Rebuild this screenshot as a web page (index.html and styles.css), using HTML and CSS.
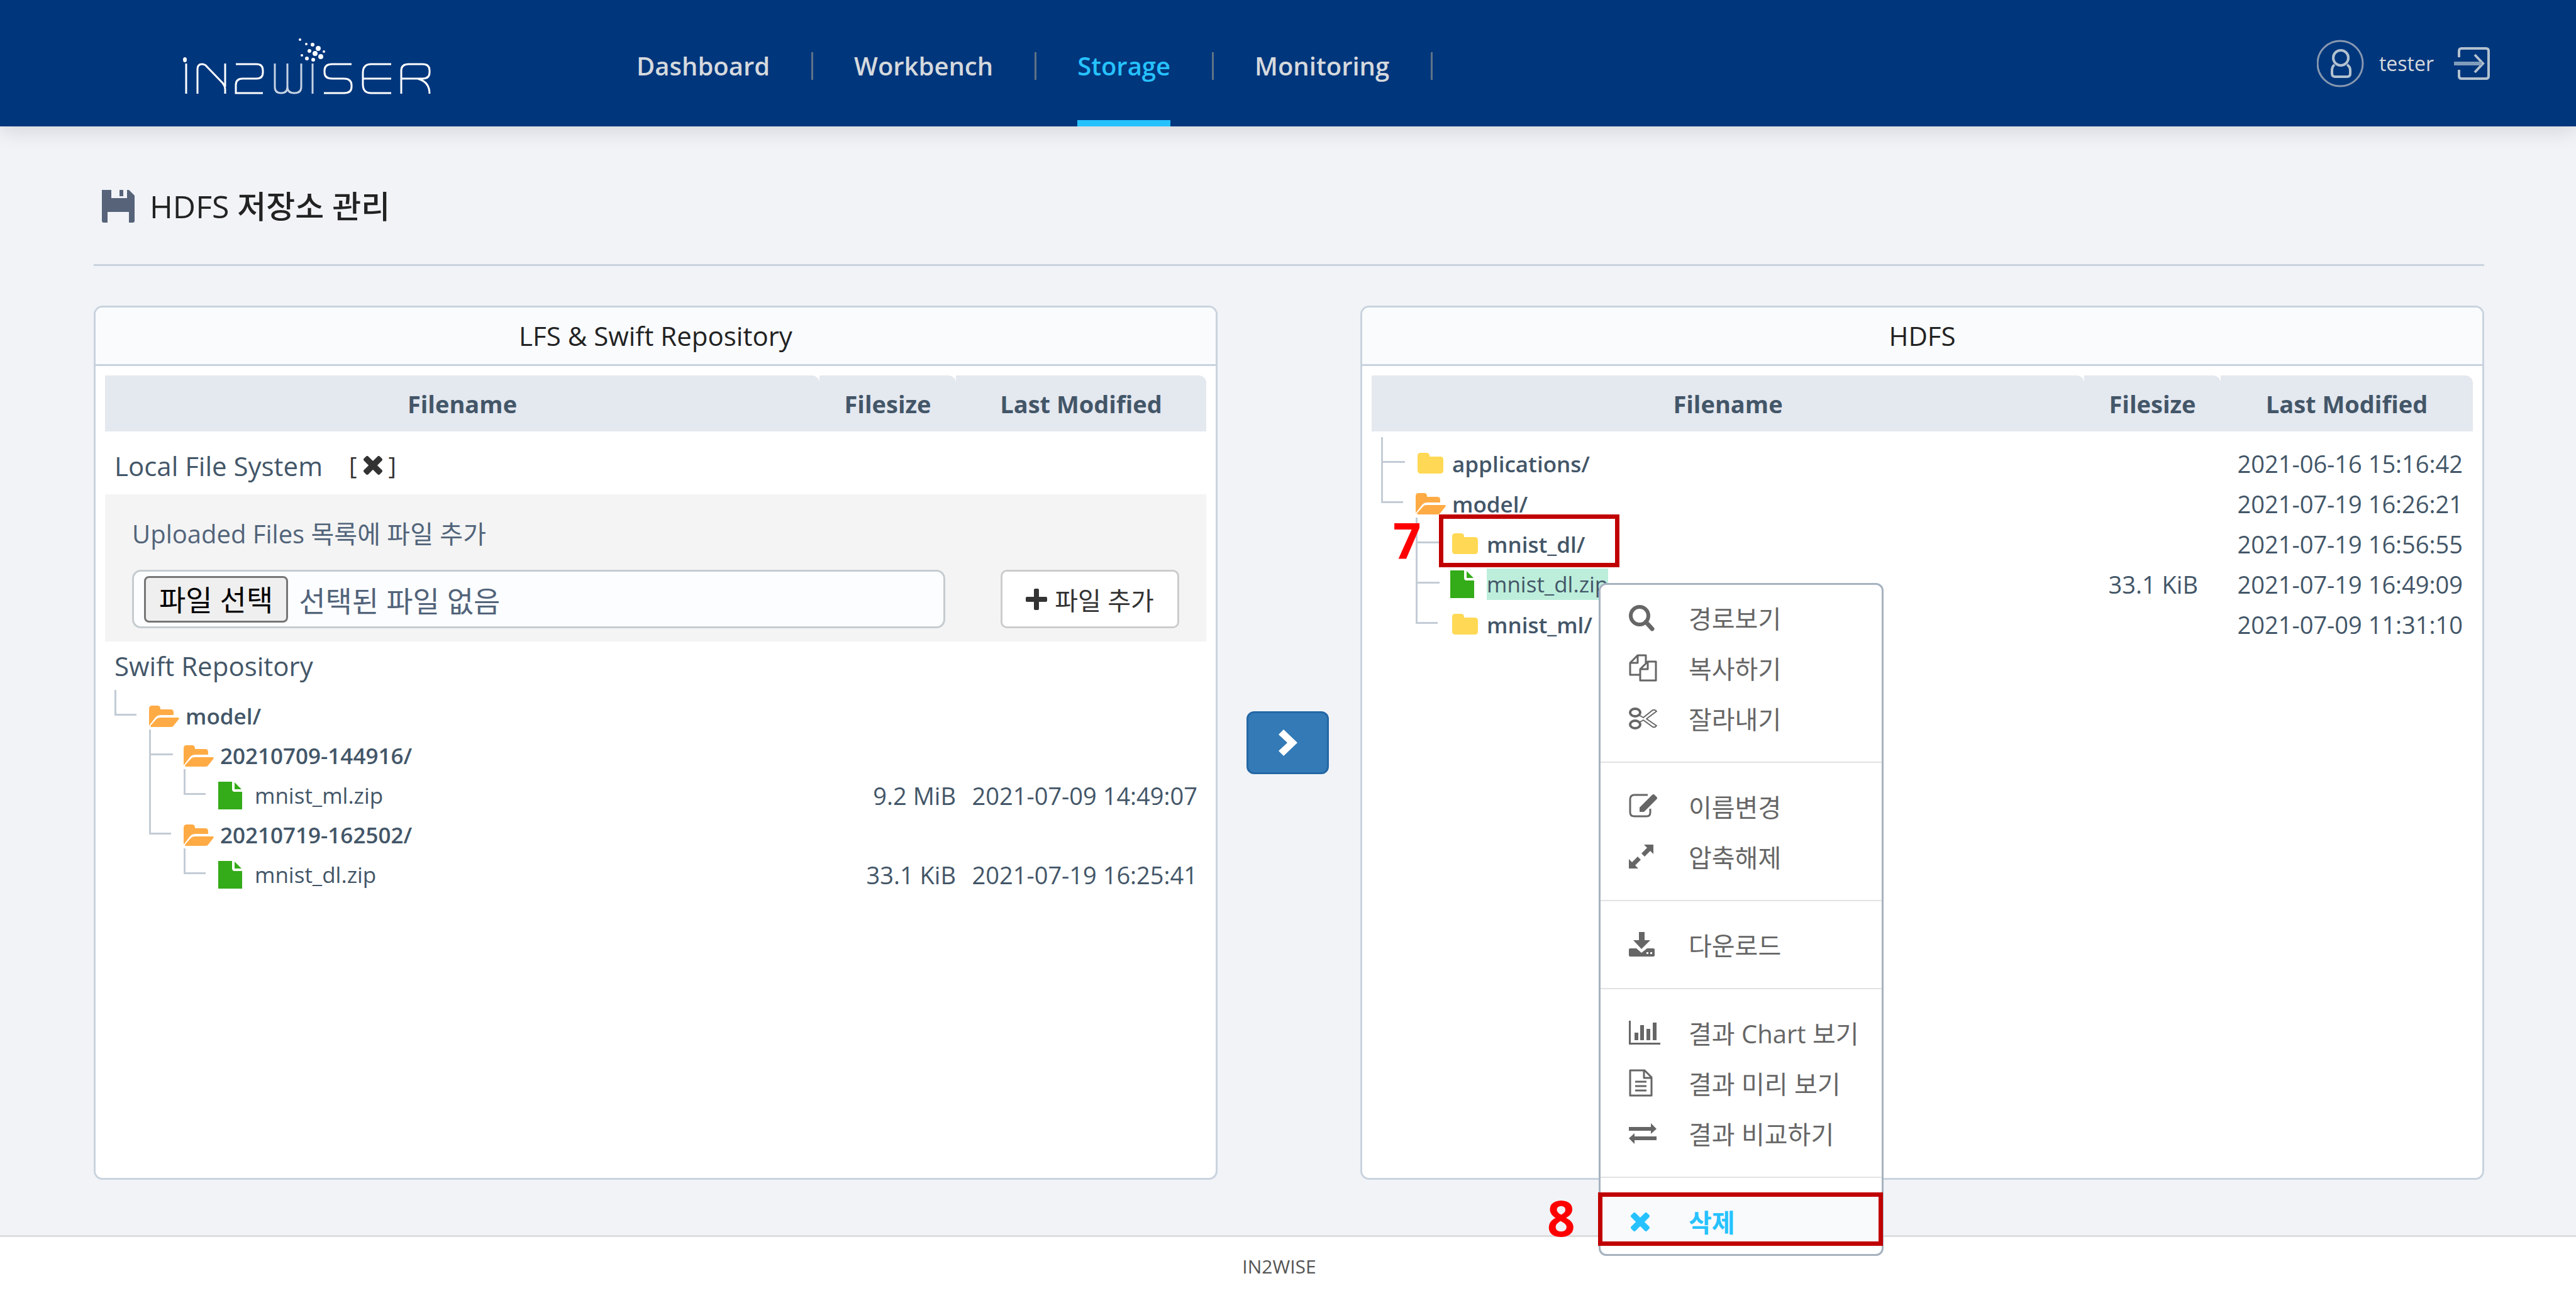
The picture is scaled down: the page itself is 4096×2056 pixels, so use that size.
FILE: index.html
```
<!DOCTYPE html>
<html lang="ko">
<head>
<meta charset="utf-8">
<meta name="viewport" content="width=device-width, initial-scale=1">
<title>IN2WISER - HDFS 저장소 관리</title>
<link rel="stylesheet" href="styles.css">
</head>
<body>

<svg class="sprite" aria-hidden="true">
  <symbol id="folder" viewBox="0 0 48 44"><path fill="#ffd955" d="M3 10q0-5 5-5h9q5 0 5 5v1h17q5 0 5 5v17q0 5-5 5H8q-5 0-5-5z"/></symbol>
  <symbol id="folder-open" viewBox="0 0 48 44"><path fill="#ffab45" d="M0 10q0-5 5-5h8q5 0 5 5v1h16q5 0 5 5v4H19q-6 0-9 4L0 37z"/><path fill="#ffab45" d="M18 24h28q3 0 1 3l-8 10q-1 2-4 2H4q-3 0-1-3l9-10q2-2 6-2z"/></symbol>
  <symbol id="file" viewBox="0 0 48 44"><path fill="#34ab18" d="M0 0h22v12q0 4 4 4h12v28H0z"/><path fill="#34ab18" d="M26 1l11 11H26z"/></symbol>
  <symbol id="times" viewBox="302 370 1188 1184"><path d="M1490 1322q0 40-28 68l-136 136q-28 28-68 28t-68-28l-294-294-294 294q-28 28-68 28t-68-28l-136-136q-28-28-28-68t28-68l294-294-294-294q-28-28-28-68t28-68l136-136q28-28 68-28t68 28l294 294 294-294q28-28 68-28t68 28l136 136q28 28 28 68t-28 68l-294 294 294 294q28 28 28 68z"/></symbol>
</svg>

<header class="topbar">
  <a class="logo" href="#" aria-label="IN2WISER">
    <svg viewBox="0 0 400 94" fill="none" stroke="#fff" stroke-width="3">
      <path d="M8 43V91M26 91V52Q26 44 33 44Q38 44 41 48L66 74Q70 79 70 84V91M70 43V80"/>
      <path d="M87 44H120Q130 44 130 54V57Q130 67 120 67H98Q87 67 87 77V90H130"/>
      <path d="M149 43V80Q149 90 159 90Q169 90 169 80V43M169 80Q169 90 180 90Q191 90 191 80V43M209 43V91" stroke="#c5d3e3"/>
      <path d="M271 44H240Q228 44 228 54V57Q228 67 240 67H259Q271 67 271 78V80Q271 90 259 90H227"/>
      <path d="M334 44H302Q289 44 289 58V76Q289 90 302 90H334M290 67H334"/>
      <path d="M350 91V54Q350 44 362 44H384Q395 44 395 54V57Q395 67 384 67H351M376 67Q395 72 395 91"/>
      <g fill="#fff" stroke="none"><ellipse cx="6" cy="37" rx="3" ry="4"/><circle cx="189" cy="5" r="2"/><circle cx="199" cy="12" r="2"/><circle cx="209" cy="13" r="3"/><circle cx="218" cy="19" r="4"/><circle cx="204" cy="23" r="3"/><circle cx="227" cy="24" r="2"/><circle cx="213" cy="27" r="4"/><circle cx="192" cy="30" r="2"/><circle cx="222" cy="32" r="4"/><circle cx="200" cy="35" r="3"/><circle cx="210" cy="37" r="3"/></g>
    </svg>
  </a>
  <nav class="nav">
    <a class="nav-link" href="#">Dashboard</a>
    <a class="nav-link" href="#">Workbench</a>
    <a class="nav-link active" href="#" aria-current="page">Storage</a>
    <a class="nav-link" href="#">Monitoring</a>
  </nav>
  <div class="user">
    <svg class="user-icon" viewBox="0 0 75 76" fill="none"><circle cx="37" cy="38" r="36" stroke="#8798b0" stroke-width="3"/><g stroke="#b3c2cf" stroke-width="4"><ellipse cx="38" cy="29" rx="12" ry="12"/><path d="M28 40Q24 43 24 49V54Q24 59 29 59H48Q53 59 53 54V49Q53 43 48 40"/></g></svg>
    <span class="user-name">tester</span>
    <a class="logout" href="#" aria-label="로그아웃"><svg viewBox="0 0 58 52" fill="none" stroke="#b3c2cf" stroke-width="4"><path d="M8 16V6Q8 2 12 2H51Q55 2 55 6V46Q55 50 51 50H12Q8 50 8 46V36"/><path d="M33 12L46 26L33 40"/><path stroke="#7f9cba" stroke-width="6" d="M0 26H44"/></svg></a>
  </div>
</header>

<main class="page">
  <h1 class="page-title">
    <svg class="save-icon" viewBox="0 0 52 52"><path fill="#566379" d="M0 0H43L52 9V49Q52 52 49 52H3Q0 52 0 49z"/><path fill="#f1f3f7" d="M15 0H40V13H15zM9 35H43V52H9z"/><path fill="#566379" d="M28 0H34V10H28z"/></svg>
    HDFS 저장소 관리
  </h1>

  <div class="panels">
    <section class="panel">
      <h2 class="panel-title">LFS &amp; Swift Repository</h2>
      <div class="panel-body">
        <table class="files files-local">
          <colgroup><col><col class="col-size"><col class="col-date"></colgroup>
          <thead><tr><th>Filename</th><th>Filesize</th><th>Last Modified</th></tr></thead>
          <tbody>
            <tr><td colspan="3"><div class="section section-local">Local File System
              <button class="close" type="button" aria-label="닫기">[<svg><use href="#times"/></svg>]</button></div></td></tr>
            <tr><td colspan="3">
              <form class="upload">
                <label class="upload-label" for="upload-file">Uploaded Files 목록에 파일 추가</label>
                <div class="upload-row">
                  <label class="file-box"><input class="file-input" id="upload-file" type="file"><span class="file-pick">파일 선택</span><span>선택된 파일 없음</span></label>
                  <button class="add" type="button"><svg viewBox="0 0 34 34"><path d="M13 2q0-2 2-2h4q2 0 2 2v11h11q2 0 2 2v4q0 2-2 2H21v11q0 2-2 2h-4q-2 0-2-2V21H2q-2 0-2-2v-4q0-2 2-2h11z"/></svg>파일 추가</button>
                </div>
              </form></td></tr>
            <tr><td colspan="3"><div class="section section-swift">Swift Repository</div></td></tr>
            <tr><td><div class="node"><i class="guide last"></i><svg class="icon"><use href="#folder-open"/></svg><span class="dir">model/</span></div></td><td></td><td></td></tr>
            <tr><td><div class="node"><i class="guide blank"></i><i class="guide"></i><svg class="icon"><use href="#folder-open"/></svg><span class="dir">20210709-144916/</span></div></td><td></td><td></td></tr>
            <tr><td><div class="node"><i class="guide blank"></i><i class="guide pipe"></i><i class="guide last"></i><svg class="icon"><use href="#file"/></svg><span class="name">mnist_ml.zip</span></div></td><td>9.2 MiB</td><td>2021-07-09 14:49:07</td></tr>
            <tr><td><div class="node"><i class="guide blank"></i><i class="guide last"></i><svg class="icon"><use href="#folder-open"/></svg><span class="dir">20210719-162502/</span></div></td><td></td><td></td></tr>
            <tr><td><div class="node"><i class="guide blank"></i><i class="guide blank"></i><i class="guide last"></i><svg class="icon"><use href="#file"/></svg><span class="name">mnist_dl.zip</span></div></td><td>33.1 KiB</td><td>2021-07-19 16:25:41</td></tr>
          </tbody>
        </table>
      </div>
    </section>

    <button class="transfer" type="button" aria-label="HDFS로 복사"><svg viewBox="0 0 30 42"><path d="M8 0L30 21L8 42L0 34L14 21L0 8z" fill="#fff"/></svg></button>

    <section class="panel">
      <h2 class="panel-title">HDFS</h2>
      <div class="panel-body">
        <table class="files files-hdfs">
          <colgroup><col><col class="col-size"><col class="col-date"></colgroup>
          <thead><tr><th>Filename</th><th>Filesize</th><th>Last Modified</th></tr></thead>
          <tbody>
            <tr><td><div class="node"><i class="guide"></i><svg class="icon"><use href="#folder"/></svg><span class="dir">applications/</span></div></td><td></td><td>2021-06-16 15:16:42</td></tr>
            <tr><td><div class="node"><i class="guide last"></i><svg class="icon"><use href="#folder-open"/></svg><span class="dir">model/</span></div></td><td></td><td>2021-07-19 16:26:21</td></tr>
            <tr><td><div class="node"><i class="guide blank"></i><i class="guide"></i><svg class="icon"><use href="#folder"/></svg><span class="dir">mnist_dl/</span><b class="mark-box mark-box-dir"></b><b class="mark mark-dir">7</b></div></td><td></td><td>2021-07-19 16:56:55</td></tr>
            <tr><td><div class="node"><i class="guide blank"></i><i class="guide"></i><svg class="icon"><use href="#file"/></svg><span class="name selected">mnist_dl.zip</span></div></td><td>33.1 KiB</td><td>2021-07-19 16:49:09</td></tr>
            <tr><td><div class="node"><i class="guide blank"></i><i class="guide last"></i><svg class="icon"><use href="#folder"/></svg><span class="dir">mnist_ml/</span></div></td><td></td><td>2021-07-09 11:31:10</td></tr>
          </tbody>
        </table>
      </div>

      <div class="menu" role="menu">
        <button class="menu-item" role="menuitem" type="button"><svg viewBox="0 0 50 44" fill="none" stroke="#666"><circle cx="17" cy="19" r="14" stroke-width="6"/><path d="M27 29L37 40" stroke-width="7" stroke-linecap="round"/></svg>경로보기</button>
        <button class="menu-item" role="menuitem" type="button"><svg viewBox="0 0 50 44" fill="none" stroke="#666" stroke-width="3" stroke-linejoin="round"><path d="M17 33H2V14L14 2H27V14M2 14H14V2M18 24L30 12H43V42H18zM18 24H30V12"/></svg>복사하기</button>
        <button class="menu-item" role="menuitem" type="button"><svg viewBox="0 0 50 44" fill="none" stroke="#666"><ellipse cx="10" cy="13" rx="8" ry="6" stroke-width="4"/><ellipse cx="10" cy="32" rx="8" ry="6" stroke-width="4"/><path stroke-width="2" stroke-linejoin="round" d="M16 17L23 21L38 9Q42 8 44 11L28 23L44 34Q42 37 38 36L23 25L16 29"/></svg>잘라내기</button>
        <hr class="menu-line">
        <button class="menu-item" role="menuitem" type="button"><svg viewBox="0 0 50 44" fill="none" stroke="#666"><path stroke-width="3" d="M30 4H9Q2 4 2 11V32Q2 38 9 38H28Q34 38 34 32V26"/><path fill="#666" stroke="none" d="M17 24L37 4Q39 2 41 4L44 7Q46 9 44 11L24 31H17z"/></svg>이름변경</button>
        <button class="menu-item" role="menuitem" type="button"><svg viewBox="0 0 50 44" fill="#666"><path d="M24 3H39V18L34 13L25 22L20 17L29 8zM0 41V26L5 31L14 22L19 27L10 36L15 41z"/></svg>압축해제</button>
        <hr class="menu-line">
        <button class="menu-item" role="menuitem" type="button"><svg viewBox="0 0 50 44" fill="#666"><path d="M16 2H25V15H34L20 29L7 15H16zM2 28H12L20 35L29 28H39Q41 28 41 30V39Q41 41 39 41H2Q0 41 0 39V30Q0 28 2 28z"/><path fill="#fff" d="M28 34h3v3h-3zM34 34h3v3h-3z"/></svg>다운로드</button>
        <hr class="menu-line">
        <button class="menu-item" role="menuitem" type="button"><svg viewBox="0 0 50 44" fill="#666"><path d="M0 3H3V38H50V41H0zM9 22H15V34H9zM18 10H24V34H18zM28 16H34V34H28zM38 6H44V34H38z"/></svg>결과 Chart 보기</button>
        <button class="menu-item" role="menuitem" type="button"><svg viewBox="0 0 50 44" fill="none" stroke="#666" stroke-width="3"><path stroke-linejoin="round" d="M2 2H25L36 13V42H2zM24 2V14H36"/><path d="M10 20H28M10 27H28M10 34H28"/></svg>결과 미리 보기</button>
        <button class="menu-item" role="menuitem" type="button"><svg viewBox="0 0 50 44" fill="#666"><path d="M0 12H35V6L44 15L35 23V18H0zM44 33H9V39L0 30L9 22V27H44z"/></svg>결과 비교하기</button>
        <hr class="menu-line">
        <button class="menu-item danger" role="menuitem" type="button"><svg viewBox="0 0 50 44" fill="#26c2ff"><use href="#times" x="3" y="8" width="30" height="30"/></svg>삭제<b class="mark-box mark-box-delete"></b><b class="mark mark-delete">8</b></button>
      </div>
    </section>
  </div>
</main>

<footer class="footer">IN2WISE</footer>

</body>
</html>
```
FILE: styles.css
```
* { box-sizing: border-box; }

body {
  margin: 0;
  min-height: 100vh;
  display: flex;
  flex-direction: column;
  background: #f1f3f7;
  color: #435668;
  font-family: "Open Sans", "Noto Sans CJK KR", sans-serif;
  font-size: 38px;
}

button { font: inherit; color: inherit; cursor: pointer; }
a { color: inherit; text-decoration: none; }
.sprite { position: absolute; width: 0; height: 0; }

/* Top bar */
.topbar {
  display: flex;
  align-items: center;
  height: 201px;
  padding: 0 136px 0 288px;
  background: #00367c;
  color: #d5d9dd;
  box-shadow: 0 8px 30px rgba(0, 20, 40, .12);
}
.logo { width: 400px; padding-top: 8px; }
.logo svg { display: block; width: 100%; }
.nav {
  display: flex;
  align-self: stretch;
  margin-left: 324px;
  font-size: 40px;
  font-weight: 600;
}
.nav-link {
  position: relative;
  display: flex;
  align-items: center;
  padding-top: 8px;
  margin-right: 134px;
}
.nav-link::after {
  content: "";
  position: absolute;
  left: calc(100% + 66px);
  top: 83px;
  width: 3px;
  height: 44px;
  background: #5f7486;
}
.nav-link.active { color: #26c2ff; }
.nav-link.active::before {
  content: "";
  position: absolute;
  inset: auto 0 0;
  height: 10px;
  background: #26c2ff;
}
.user {
  display: flex;
  align-items: center;
  gap: 24px;
  margin-left: auto;
}
.user-icon { width: 75px; height: 76px; }
.user-name { font-size: 32px; }
.logout { margin-left: 8px; }
.logout svg { display: block; width: 58px; height: 52px; }

/* Page */
.page {
  flex: 1;
  display: flex;
  flex-direction: column;
  padding: 91px 146px 88px 149px;
}
.page-title {
  display: flex;
  align-items: center;
  gap: 24px;
  margin: 0 0 63px;
  padding: 0 0 56px 13px;
  border-bottom: 3px solid #c9d3de;
  color: #222;
  font-size: 50px;
  font-weight: 500;
  line-height: 72px;
}
.save-icon { width: 52px; height: 52px; }
.panels {
  flex: 1;
  display: grid;
  grid-template-columns: 1fr 227px 1fr;
}
.panel {
  position: relative;
  border: 3px solid #c9d3de;
  border-radius: 14px;
  background: #fff;
}
.panel-title {
  margin: 0;
  border-bottom: 3px solid #c9d3de;
  border-radius: 11px 11px 0 0;
  background: #f9fbfd;
  color: #222;
  font-size: 42px;
  font-weight: 500;
  line-height: 90px;
  text-align: center;
}
.panel-body { padding: 15px; }
.transfer {
  place-self: center;
  display: grid;
  place-items: center;
  width: 131px;
  height: 100px;
  margin-right: 4px;
  border: 3px solid #2467a5;
  border-radius: 12px;
  background: #337ab7;
}
.transfer svg { width: 30px; height: 42px; }

/* File tables */
.files {
  --row: 64px;
  width: 100%;
  table-layout: fixed;
  border-spacing: 0;
}
.files-local { --row: 63px; }
.col-size { width: 217px; }
.col-date { width: 401px; }
.files-local .col-date { width: 398px; }
.files th {
  height: 89px;
  padding: 0;
  border-top-right-radius: 12px;
  background: #e4e8ef;
  line-height: 52px;
}
.files td { padding: 0; white-space: nowrap; }
.files td:nth-child(n+2) { text-align: right; }
.files-local td:nth-child(3) { padding-right: 14px; }
.files-hdfs td:nth-child(2) { padding-right: 36px; }
.files-hdfs td:nth-child(3) { padding-right: 16px; }
.files-hdfs thead::after { content: ""; display: block; height: 19px; }

.section {
  display: flex;
  align-items: center;
  gap: 42px;
  padding-left: 15px;
  font-size: 42px;
}
.section-local { height: 100px; padding-top: 8px; }
.section-swift { height: 87px; padding-bottom: 10px; }
.close {
  display: flex;
  align-items: center;
  gap: 10px;
  padding: 0;
  border: 0;
  background: none;
  color: #333;
  font-size: 38px;
}
.close svg { width: 30px; height: 30px; fill: #333; }

.upload {
  display: flex;
  flex-direction: column;
  gap: 27px;
  padding: 33px 43px 21px;
  background: #f4f4f4;
  color: #52647a;
}
.upload-label { font-size: 40px; line-height: 60px; }
.upload-row { display: flex; gap: 88px; }
.file-box {
  flex: 1;
  display: flex;
  align-items: center;
  gap: 17px;
  height: 93px;
  padding-left: 16px;
  border: 3px solid #c5ccd0;
  border-radius: 14px;
  background: #fcfdff;
  font-size: 46px;
}
.file-input { position: absolute; width: 1px; height: 1px; opacity: 0; }
.file-pick {
  padding: 0 21px;
  border: 3px solid #767676;
  border-radius: 8px;
  background: #efefef;
  color: #000;
  line-height: 68px;
}
.add {
  display: flex;
  align-items: center;
  justify-content: center;
  gap: 12px;
  width: 284px;
  border: 3px solid #ccc;
  border-radius: 10px;
  background: #fff;
  color: #333;
  font-size: 40px;
}
.add svg { width: 34px; height: 34px; fill: #333; }

/* Tree rows */
.node {
  position: relative;
  display: flex;
  align-items: center;
  height: var(--row);
  padding-left: 15px;
}
.guide {
  position: relative;
  flex: none;
  width: 55px;
  height: var(--row);
}
.guide::before,
.guide::after { content: ""; position: absolute; background: #c3ccd6; }
.guide::before { left: 0; top: -10px; width: 3px; height: calc(var(--row) + 10px); }
.guide::after { left: 0; top: 28px; width: 38px; height: 3px; }
.guide.last::before { height: 41px; }
.guide.last::after { width: 35px; }
.guide.pipe::after,
.guide.blank::before,
.guide.blank::after { display: none; }
.icon { flex: none; width: 48px; height: 44px; margin-right: 10px; }
.dir { font-size: 35px; font-weight: 600; }
.name { font-size: 35px; }
.selected { line-height: 50px; background: #bdeedb; }

/* Context menu */
.menu {
  position: absolute;
  z-index: 2;
  left: 376px;
  top: 438px;
  width: 453px;
  padding: 12px 0;
  border: 3px solid #a6b2bf;
  border-radius: 12px;
  background: #fff;
}
.menu-item {
  position: relative;
  display: flex;
  align-items: center;
  gap: 45px;
  width: 100%;
  height: 80px;
  padding: 0 0 0 45px;
  border: 0;
  background: none;
  color: #666;
  font-size: 40px;
}
.menu-item svg { width: 50px; height: 44px; }
.menu-line {
  margin: 29px 0;
  border: 0;
  border-top: 2px solid #e2e2e2;
}
.danger { background: #f8fafc; color: #26c2ff; font-weight: 600; }

/* Numbered step marks */
.mark-box { position: absolute; border: 7px solid #c00000; }
.mark-box-dir { left: 107px; top: -15px; width: 287px; height: 84px; }
.mark-box-delete { inset: -6px -2px 1px -4px; }
.mark {
  position: absolute;
  color: #f00;
  font: 700 78px/78px "Noto Sans", sans-serif;
}
.mark-dir { left: 34px; top: -14px; }
.mark-delete { left: -85px; top: -5px; }

.footer {
  height: 92px;
  padding: 4px 28px 0 0;
  border-top: 3px solid #ddd;
  background: #fff;
  color: #555;
  font-size: 30px;
  line-height: 85px;
  text-align: center;
}
```
